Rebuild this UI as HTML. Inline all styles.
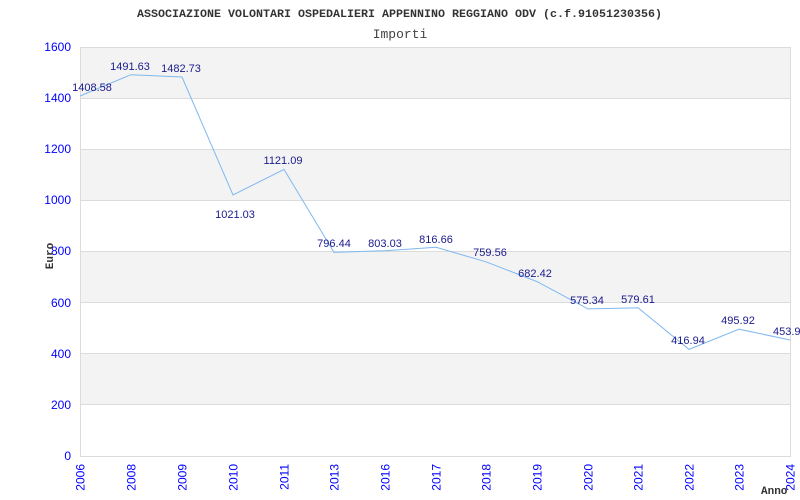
<!DOCTYPE html>
<html><head><meta charset="utf-8"><style>
html,body{margin:0;padding:0;background:#fff;width:800px;height:500px;overflow:hidden}
</style></head><body>
<svg width="800" height="500" xmlns="http://www.w3.org/2000/svg" font-family="Liberation Sans, sans-serif">
<rect width="800" height="500" fill="#fff"/>
<g fill="#f3f3f3">
<rect x="80" y="47" width="710" height="51.1"/>
<rect x="80" y="149.3" width="710" height="51.1"/>
<rect x="80" y="251.5" width="710" height="51.1"/>
<rect x="80" y="353.8" width="710" height="51.1"/>
</g>
<g stroke="#dcdcdc" stroke-width="1">
<line x1="80" y1="47.5" x2="790" y2="47.5"/>
<line x1="80" y1="98.5" x2="790" y2="98.5"/>
<line x1="80" y1="149.5" x2="790" y2="149.5"/>
<line x1="80" y1="200.5" x2="790" y2="200.5"/>
<line x1="80" y1="251.5" x2="790" y2="251.5"/>
<line x1="80" y1="302.5" x2="790" y2="302.5"/>
<line x1="80" y1="353.5" x2="790" y2="353.5"/>
<line x1="80" y1="404.5" x2="790" y2="404.5"/>
<line x1="80" y1="456.5" x2="790" y2="456.5"/>
<line x1="80.5" y1="47" x2="80.5" y2="457"/>
<line x1="790.5" y1="47" x2="790.5" y2="457"/>
</g>
<polyline fill="none" stroke="#7fb8f0" stroke-width="1" points="80,96 131,74.7 182,77 233,195 284,169.4 334,252.4 385,250.7 436,247.3 486,261.8 537,281.6 588,308.9 638,307.8 689,349.4 739,329.2 790,340"/>
<g fill="#0000ff" font-size="12" text-anchor="end">
<text x="71" y="51">1600</text><text x="71" y="102">1400</text><text x="71" y="153">1200</text>
<text x="71" y="204">1000</text><text x="71" y="255">800</text><text x="71" y="307">600</text>
<text x="71" y="358">400</text><text x="71" y="409">200</text><text x="71" y="460">0</text>
</g>
<g fill="#0000ff" font-size="12" text-anchor="end">
<text transform="translate(84.5,464) rotate(-90)">2006</text>
<text transform="translate(135.5,464) rotate(-90)">2008</text>
<text transform="translate(186.5,464) rotate(-90)">2009</text>
<text transform="translate(237.5,464) rotate(-90)">2010</text>
<text transform="translate(288.5,464) rotate(-90)">2011</text>
<text transform="translate(338.5,464) rotate(-90)">2013</text>
<text transform="translate(389.5,464) rotate(-90)">2016</text>
<text transform="translate(440.5,464) rotate(-90)">2017</text>
<text transform="translate(490.5,464) rotate(-90)">2018</text>
<text transform="translate(541.5,464) rotate(-90)">2019</text>
<text transform="translate(592.5,464) rotate(-90)">2020</text>
<text transform="translate(642.5,464) rotate(-90)">2021</text>
<text transform="translate(693.5,464) rotate(-90)">2022</text>
<text transform="translate(743.5,464) rotate(-90)">2023</text>
<text transform="translate(794.5,464) rotate(-90)">2024</text>
</g>
<g fill="#1a1a8c" font-size="11" text-anchor="middle">
<text x="92" y="91">1408.58</text>
<text x="130" y="70">1491.63</text>
<text x="181" y="72">1482.73</text>
<text x="235" y="218">1021.03</text>
<text x="283" y="164">1121.09</text>
<text x="334" y="247">796.44</text>
<text x="385" y="247">803.03</text>
<text x="436" y="243">816.66</text>
<text x="490" y="256">759.56</text>
<text x="535" y="277">682.42</text>
<text x="587" y="304">575.34</text>
<text x="638" y="303">579.61</text>
<text x="688" y="344">416.94</text>
<text x="738" y="324">495.92</text>
<text x="773" y="335" text-anchor="start">453.9</text>
</g>
<text x="137" y="17" textLength="525" lengthAdjust="spacingAndGlyphs" font-family="Liberation Mono, monospace" font-weight="bold" font-size="11" fill="#333">ASSOCIAZIONE VOLONTARI OSPEDALIERI APPENNINO REGGIANO ODV (c.f.91051230356)</text>
<text x="400" y="38" text-anchor="middle" font-family="Liberation Mono, monospace" font-size="13" fill="#444">Importi</text>
<text transform="translate(53,256) rotate(-90)" text-anchor="middle" font-family="Liberation Mono, monospace" font-weight="bold" font-size="11" fill="#333">Euro</text>
<text x="761" y="494" font-family="Liberation Mono, monospace" font-weight="bold" font-size="11" fill="#333">Anno</text>
</svg>
</body></html>
